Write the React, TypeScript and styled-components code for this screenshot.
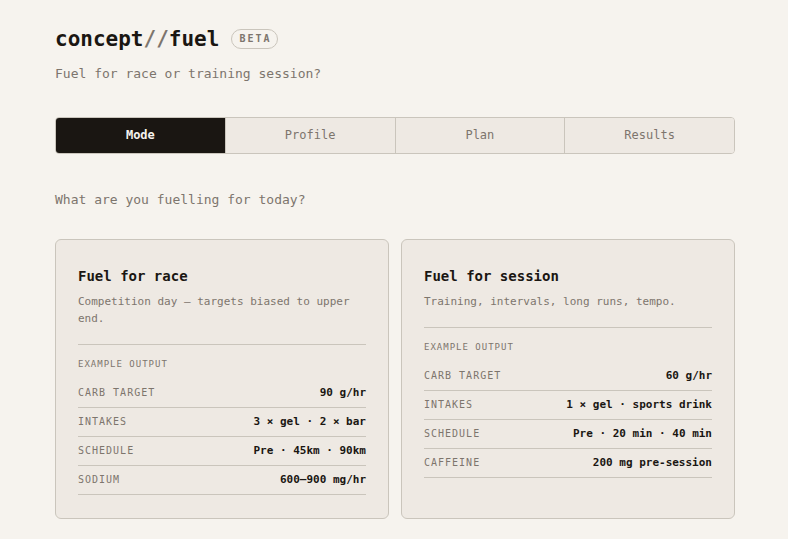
import React, { useState } from 'react';
import styled, { createGlobalStyle } from 'styled-components';

const colors = {
  page: '#f6f3ee',
  panel: '#eee9e3',
  line: '#cac5bc',
  ink: '#1a1612',
  muted: '#7d756d',
};

const mono = "'DejaVu Sans Mono', 'Liberation Mono', monospace";

interface Mode {
  id: string;
  title: string;
  description: string;
  output: [string, string][];
}

const steps = ['Mode', 'Profile', 'Plan', 'Results'];

const modes: Mode[] = [
  {
    id: 'race',
    title: 'Fuel for race',
    description: 'Competition day — targets biased to upper end.',
    output: [
      ['Carb target', '90 g/hr'],
      ['Intakes', '3 × gel · 2 × bar'],
      ['Schedule', 'Pre · 45km · 90km'],
      ['Sodium', '600–900 mg/hr'],
    ],
  },
  {
    id: 'session',
    title: 'Fuel for session',
    description: 'Training, intervals, long runs, tempo.',
    output: [
      ['Carb target', '60 g/hr'],
      ['Intakes', '1 × gel · sports drink'],
      ['Schedule', 'Pre · 20 min · 40 min'],
      ['Caffeine', '200 mg pre-session'],
    ],
  },
];

const GlobalStyle = createGlobalStyle`
  * {
    box-sizing: border-box;
  }

  body {
    margin: 0;
    background: ${colors.page};
    color: ${colors.ink};
    font-family: ${mono};
  }
`;

const Page = styled.main`
  padding: 24px 53px 20px 55px;
`;

const Brand = styled.div`
  display: flex;
  align-items: center;
  gap: 12px;
`;

const Logo = styled.h1`
  margin: 0;
  font-size: 21px;
  line-height: 30px;
  font-weight: 700;

  span {
    color: ${colors.muted};
  }
`;

const Badge = styled.span`
  padding: 0 6px 0 7px;
  border: 1px solid ${colors.line};
  border-radius: 10px;
  color: ${colors.muted};
  font-size: 10px;
  line-height: 18px;
  font-weight: 700;
  letter-spacing: 2px;
`;

const Lead = styled.p`
  margin: 10px 0 33px;
  color: ${colors.muted};
  font-size: 13px;
  line-height: 20px;
`;

const Question = styled.h2`
  margin: 36px 0 29px;
  color: ${colors.muted};
  font-size: 13px;
  line-height: 20px;
  font-weight: 400;
`;

const Steps = styled.nav`
  display: flex;
  overflow: hidden;
  border: 1px solid ${colors.line};
  border-radius: 4px;
`;

const Step = styled.button<{ $active: boolean }>`
  flex: 1;
  padding: 8px 4px 9px;
  border: 0;
  border-right: 1px solid ${colors.line};
  background: ${({ $active }) => ($active ? colors.ink : colors.panel)};
  color: ${({ $active }) => ($active ? colors.page : colors.muted)};
  font-family: inherit;
  font-size: 12px;
  line-height: 18px;
  font-weight: ${({ $active }) => ($active ? 700 : 400)};
  cursor: pointer;

  &:last-child {
    border-right: 0;
  }
`;

const Cards = styled.div`
  display: grid;
  grid-template-columns: 1fr 1fr;
  gap: 12px;
`;

const Card = styled.button`
  display: flex;
  flex-direction: column;
  align-items: stretch;
  justify-content: flex-start;
  padding: 24px 22px 23px;
  border: 1px solid ${colors.line};
  border-radius: 6px;
  background: ${colors.panel};
  color: inherit;
  font-family: inherit;
  text-align: left;
  cursor: pointer;

  &:hover {
    border-color: ${colors.ink};
  }
`;

const CardTitle = styled.span`
  font-size: 14px;
  line-height: 24px;
  font-weight: 700;
`;

const CardText = styled.span`
  margin: 5px 0 17px;
  color: ${colors.muted};
  font-size: 11px;
  line-height: 17px;
`;

const Example = styled.span`
  display: flex;
  flex-direction: column;
  padding-top: 12px;
  border-top: 1px solid ${colors.line};
`;

const ExampleTitle = styled.span`
  margin-bottom: 8px;
  color: ${colors.muted};
  font-size: 9px;
  line-height: 14px;
  letter-spacing: 1px;
  text-transform: uppercase;
`;

const Row = styled.span`
  display: flex;
  align-items: center;
  justify-content: space-between;
  gap: 8px;
  padding: 5px 0;
  border-bottom: 1px solid ${colors.line};
  line-height: 18px;
`;

const RowLabel = styled.span`
  color: ${colors.muted};
  font-size: 10px;
  letter-spacing: 1px;
  text-transform: uppercase;
`;

const RowValue = styled.span`
  font-size: 11px;
  font-weight: 700;
  text-align: right;
`;

const ModeCard = ({ mode, onSelect }: { mode: Mode; onSelect: () => void }) => (
  <Card type="button" onClick={onSelect}>
    <CardTitle>{mode.title}</CardTitle>
    <CardText>{mode.description}</CardText>
    <Example>
      <ExampleTitle>Example output</ExampleTitle>
      {mode.output.map(([label, value]) => (
        <Row key={label}>
          <RowLabel>{label}</RowLabel>
          <RowValue>{value}</RowValue>
        </Row>
      ))}
    </Example>
  </Card>
);

export default function App() {
  const [step, setStep] = useState(0);

  return (
    <Page>
      <GlobalStyle />
      <header>
        <Brand>
          <Logo>
            concept<span>//</span>fuel
          </Logo>
          <Badge>BETA</Badge>
        </Brand>
        <Lead>Fuel for race or training session?</Lead>
      </header>
      <Steps aria-label="Steps">
        {steps.map((name, i) => (
          <Step
            key={name}
            type="button"
            $active={i === step}
            aria-current={i === step ? 'step' : undefined}
            onClick={() => setStep(i)}
          >
            {name}
          </Step>
        ))}
      </Steps>
      <Question>What are you fuelling for today?</Question>
      <Cards>
        {modes.map((mode) => (
          <ModeCard key={mode.id} mode={mode} onSelect={() => setStep(1)} />
        ))}
      </Cards>
    </Page>
  );
}
